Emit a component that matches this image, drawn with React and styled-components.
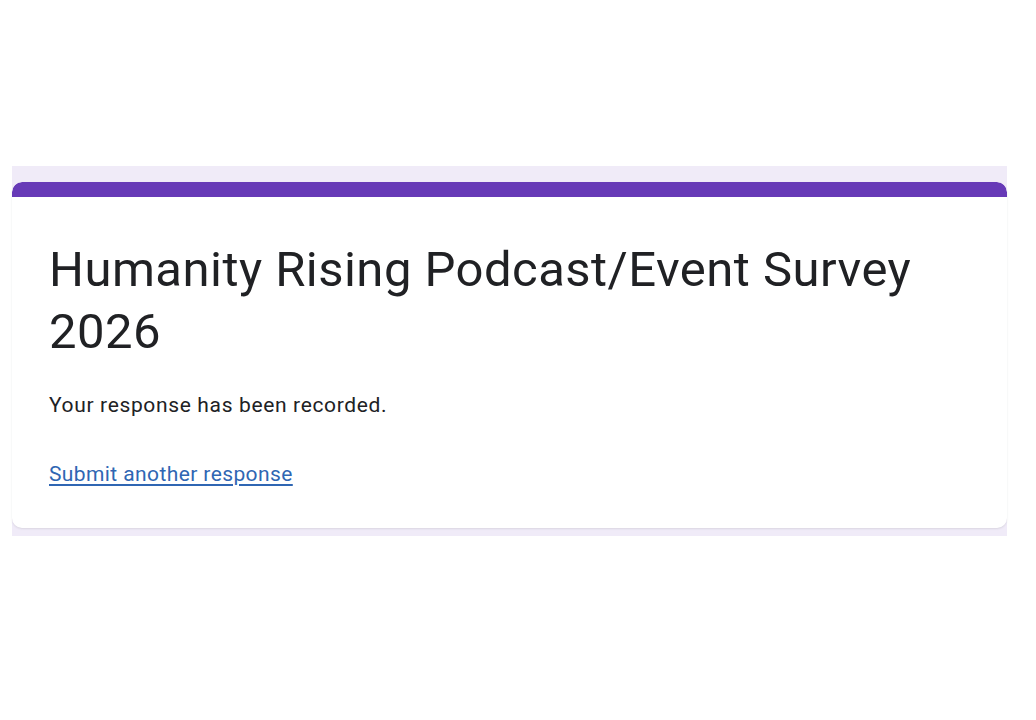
import React from "react";
import styled, { createGlobalStyle } from "styled-components";

const Global = createGlobalStyle`
  html, body { margin: 0; padding: 0; background: #ffffff; }
  body { font-family: Roboto, "Noto Sans", Arial, sans-serif; }
`;

const Page = styled.div`
  width: 1036px;
  height: 720px;
  padding-top: 166px;
  box-sizing: border-box;
  background: #ffffff;
`;

const Band = styled.div`
  margin-left: 12px;
  width: 995px;
  background: #f0ebf8;
  padding-top: 16px;
  padding-bottom: 8px;
`;

const Card = styled.div`
  background: #ffffff;
  border-radius: 10px;
  box-shadow: 0 1px 2px rgba(60, 64, 67, 0.12);
  overflow: hidden;
`;

const TopBar = styled.div`
  height: 15px;
  background: #673ab7;
  border-radius: 10px 10px 0 0;
`;

const Body = styled.div`
  display: flex;
  flex-direction: column;
  align-items: flex-start;
  padding: 42px 37px 39px;
`;

const Title = styled.h1`
  margin: 0;
  font-family: Roboto, "Noto Sans", sans-serif;
  font-weight: 400;
  font-size: 49px;
  line-height: 62px;
  letter-spacing: 0.47px;
  color: #202124;
  max-width: 890px;
`;

const Message = styled.p`
  margin: 27px 0 0;
  font-family: Roboto, "Noto Sans", sans-serif;
  font-size: 21px;
  line-height: 30px;
  letter-spacing: 0.65px;
  color: #202124;
`;

const Link = styled.a`
  margin-top: 39px;
  font-family: Roboto, "Noto Sans", sans-serif;
  font-size: 21px;
  line-height: 30px;
  letter-spacing: 0.4px;
  color: #2f66b3;
  text-decoration: underline;
  text-underline-offset: 3px;
  cursor: pointer;
`;

export default function App() {
  return (
    <>
      <Global />
      <Page>
        <Band>
          <Card>
            <TopBar />
            <Body>
              <Title>Humanity Rising Podcast/Event Survey 2026</Title>
              <Message>Your response has been recorded.</Message>
              <Link href="#">Submit another response</Link>
            </Body>
          </Card>
        </Band>
      </Page>
    </>
  );
}
